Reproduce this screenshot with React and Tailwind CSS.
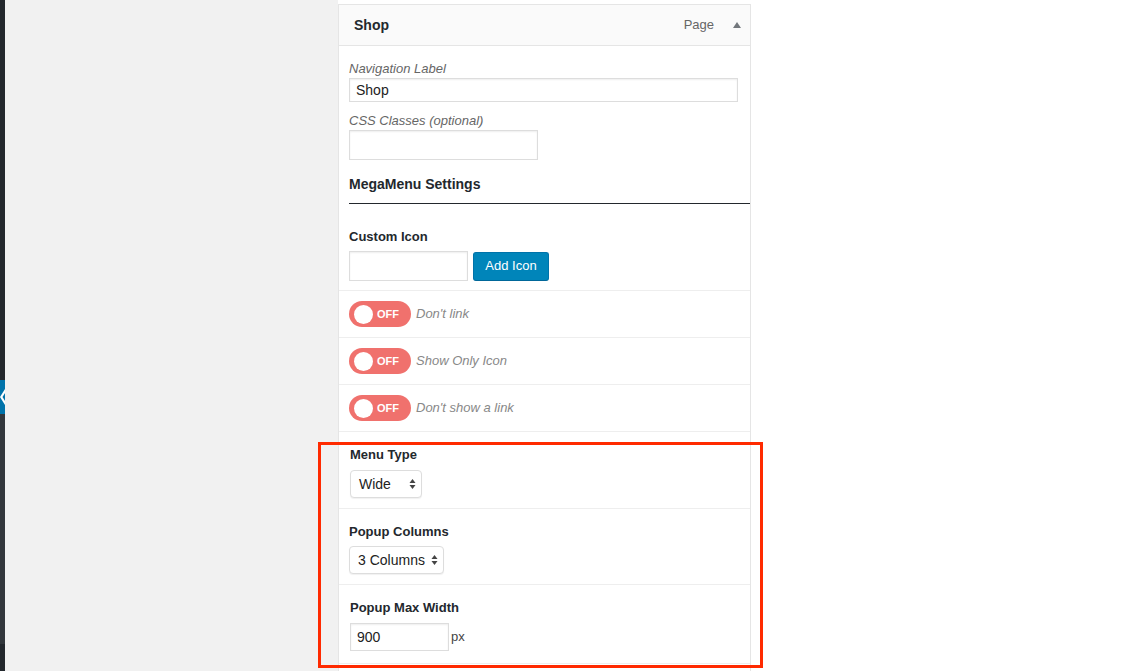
import React from "react";

const font = { fontFamily: '"Liberation Sans", Arial, sans-serif' };

function Toggle({ label }) {
  return (
    <div className="flex items-center h-[47px] border-b border-[#eeeeee] pl-[10px]">
      <div className="flex items-center w-[62px] h-[26px] rounded-full bg-[#f0716d] pl-[5px]">
        <div className="w-[19px] h-[19px] rounded-full bg-white" />
        <span className="ml-[4px] text-[11px] font-bold text-white leading-none">OFF</span>
      </div>
      <span className="ml-[5px] text-[13px] italic text-[#888888]">{label}</span>
    </div>
  );
}

function Arrows() {
  return (
    <svg width="7" height="12" viewBox="0 0 7 12" className="shrink-0">
      <path d="M3.5 1 L6.5 5 L0.5 5 Z" fill="#444" />
      <path d="M3.5 11 L6.5 7 L0.5 7 Z" fill="#444" />
    </svg>
  );
}

function Select({ value, width }) {
  return (
    <div
      className={`flex items-center justify-between h-[28px] ${width} rounded-[4px] border border-[#dddddd] bg-white shadow-[0_1px_1px_rgba(0,0,0,0.06)] pl-[8px] pr-[5px]`}
    >
      <span className="text-[14px] text-[#222222]">{value}</span>
      <Arrows />
    </div>
  );
}

export default function App() {
  return (
    <div className="relative flex h-[671px] w-[1138px] overflow-hidden bg-white text-[#23282d]" style={font}>
      {/* admin sidebar edge */}
      <div className="flex flex-col w-[5px] shrink-0">
        <div className="h-[380px] bg-[#23282d]" />
        <div className="h-[34px] bg-[#0073aa] flex items-center">
          <svg width="5" height="18" viewBox="0 0 5 18">
            <path d="M5 1 L0 9 L5 17 L5 13 L2.5 9 L5 5 Z" fill="#ffffff" />
          </svg>
        </div>
        <div className="h-[230px] bg-[#32373c]" />
        <div className="flex-1 bg-[#23282d]" />
      </div>

      <div className="w-[333px] shrink-0 bg-[#f1f1f1]" />

      {/* menu item panel */}
      <div className="w-[413px] shrink-0 pt-[4px] bg-white">
        <div className="h-full border border-b-0 border-[#e5e5e5] bg-white">
          <div className="flex items-center h-[41px] bg-[#fafafa] border-b border-[#e5e5e5] pl-[15px] pr-[9px]">
            <span className="text-[14px] font-bold text-[#23282d]">Shop</span>
            <span className="ml-auto text-[13px] text-[#666666]">Page</span>
            <svg width="8" height="6" viewBox="0 0 8 6" className="ml-[19px]">
              <path d="M4 0 L8 6 L0 6 Z" fill="#72777c" />
            </svg>
          </div>

          <div className="pt-[14px] pl-[10px]">
            <div className="text-[13px] leading-[17px] italic text-[#666666]">Navigation Label</div>
            <div className="mt-[1px] w-[389px] h-[24px] border border-[#dddddd] shadow-[inset_0_1px_2px_rgba(0,0,0,0.07)] flex items-center pl-[6px] text-[14px] text-[#222222]">
              Shop
            </div>
            <div className="mt-[10px] text-[13px] leading-[17px] italic text-[#666666]">CSS Classes (optional)</div>
            <div className="mt-[1px] w-[189px] h-[30px] border border-[#dddddd] shadow-[inset_0_1px_2px_rgba(0,0,0,0.07)]" />
            <div className="mt-[15px] pb-[10px] border-b border-[#23282d] text-[14px] leading-[18px] font-bold">
              MegaMenu Settings
            </div>
          </div>

          <div className="pt-[25px] pl-[10px] pb-[9px] border-b border-[#eeeeee]">
            <div className="text-[13px] leading-[16px] font-bold">Custom Icon</div>
            <div className="mt-[6px] flex items-center">
              <div className="w-[119px] h-[30px] border border-[#dddddd] shadow-[inset_0_1px_2px_rgba(0,0,0,0.07)]" />
              <button className="ml-[5px] w-[76px] h-[29px] rounded-[3px] bg-[#0085ba] border border-[#0073aa] border-b-[#006799] text-[13px] text-white">
                Add Icon
              </button>
            </div>
          </div>

          <Toggle label="Don't link" />
          <Toggle label="Show Only Icon" />
          <Toggle label="Don't show a link" />

          <div className="pt-[15px] pl-[11px] pb-[10px] border-b border-[#eeeeee]">
            <div className="text-[13px] leading-[16px] font-bold">Menu Type</div>
            <div className="mt-[7px]">
              <Select value="Wide" width="w-[72px]" />
            </div>
          </div>

          <div className="pt-[15px] pl-[10px] pb-[10px] border-b border-[#eeeeee]">
            <div className="text-[13px] leading-[16px] font-bold">Popup Columns</div>
            <div className="mt-[6px]">
              <Select value="3 Columns" width="w-[95px]" />
            </div>
          </div>

          <div className="pt-[15px] pl-[11px] pb-[12px] border-b border-[#eeeeee]">
            <div className="text-[13px] leading-[16px] font-bold">Popup Max Width</div>
            <div className="mt-[7px] flex items-center">
              <div className="w-[99px] h-[28px] border border-[#dddddd] shadow-[inset_0_1px_2px_rgba(0,0,0,0.07)] flex items-center pl-[6px] text-[14px] text-[#222222]">
                900
              </div>
              <span className="ml-[2px] text-[13px] text-[#444444]">px</span>
            </div>
          </div>
        </div>
      </div>

      <div className="flex-1 bg-white" />

      {/* annotation highlight */}
      <div className="absolute left-[318px] top-[442px] w-[445px] h-[226px] border-[3px] border-[#ff2a00]" />
    </div>
  );
}
